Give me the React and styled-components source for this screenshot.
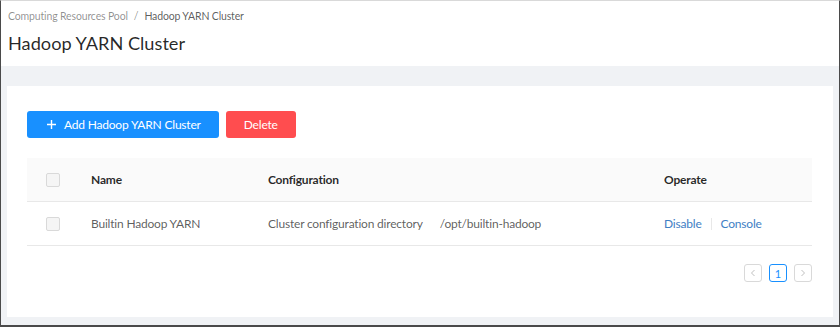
import styled, { createGlobalStyle } from "styled-components";

const GlobalStyle = createGlobalStyle`
  html, body { margin: 0; padding: 0; }
  body {
    font-family: Lato, "Open Sans", sans-serif;
    color: rgba(0, 0, 0, 0.65);
    background: #fff;
  }
`;

const Frame = styled.div`
  width: 840px;
  height: 327px;
  box-sizing: border-box;
  border: 1px solid #4a4a4a;
  border-top-color: #d9d9d9;
  border-bottom-width: 2px;
  background: #f0f2f5;
  display: flex;
  flex-direction: column;
  overflow: hidden;
`;

const Header = styled.div`
  background: #fff;
  padding: 7px 7px 0 7px;
  height: 65px;
  box-sizing: border-box;
`;

const Crumbs = styled.div`
  font-size: 10.5px;
  letter-spacing: -0.15px;
  color: rgba(0, 0, 0, 0.45);
  display: flex;
  gap: 6px;
  line-height: 16px;

  span:last-child { color: rgba(0, 0, 0, 0.65); }
`;

const Title = styled.h1`
  margin: 6px 0 0;
  font-size: 18.2px;
  font-weight: 400;
  color: rgba(0, 0, 0, 0.85);
  line-height: 26px;
`;

const Body = styled.div`
  padding: 20px 6px 8px 6px;
  flex: 1;
  display: flex;
`;

const Card = styled.div`
  flex: 1;
  background: #fff;
  padding: 25px 20px 0 20px;
`;

const Toolbar = styled.div`
  display: flex;
  gap: 7px;
  margin-bottom: 20px;
`;

const Button = styled.button`
  height: 27px;
  border: none;
  border-radius: 3px;
  padding: ${({ $wide }) => ($wide ? "0 18px 0 20px" : "0 18px")};
  min-width: ${({ $wide }) => ($wide ? "191px" : "70px")};
  justify-content: center;
  font-family: inherit;
  font-size: 12px;
  letter-spacing: -0.2px;
  color: #fff;
  background: ${({ $danger }) => ($danger ? "#ff4d4f" : "#1890ff")};
  display: flex;
  align-items: center;
  gap: 8px;
`;

const Table = styled.div`
  width: 785px;
  font-size: 12px;
  letter-spacing: -0.2px;
`;

const Row = styled.div`
  display: grid;
  grid-template-columns: 64px 177px 396px 1fr;
  align-items: center;
  height: 43px;
  border-bottom: 1px solid #e8e8e8;
  background: ${({ $head }) => ($head ? "#fafafa" : "#fff")};
  color: ${({ $head }) => ($head ? "rgba(0,0,0,0.85)" : "rgba(0,0,0,0.65)")};
  font-weight: ${({ $head }) => ($head ? 700 : 400)};
`;

const Check = styled.span`
  width: 12px;
  height: 12px;
  margin-left: 19px;
  border: 1px solid #d9d9d9;
  background: #f5f5f5;
  border-radius: 2px;
`;

const Config = styled.span`
  display: flex;
  gap: 17px;
`;

const Ops = styled.span`
  display: flex;
  align-items: center;
  gap: 9px;
  color: #3f80c4;
  font-weight: 400;
`;

const Divider = styled.i`
  width: 1px;
  height: 12px;
  background: #e8e8e8;
`;

const Pager = styled.div`
  width: 785px;
  display: flex;
  justify-content: flex-end;
  gap: 7px;
  margin-top: 18px;
`;

const PageItem = styled.span`
  width: 16px;
  height: 16px;
  border: 1px solid ${({ $active }) => ($active ? "#1890ff" : "#d9d9d9")};
  border-radius: 3px;
  display: flex;
  align-items: center;
  justify-content: center;
  font-size: 11px;
  color: ${({ $active }) => ($active ? "#1890ff" : "#c0c0c0")};
`;

const Chevron = ({ dir }) => (
  <svg width="8" height="8" viewBox="0 0 8 8">
    <path
      d={dir === "left" ? "M5.5 1 L2.5 4 L5.5 7" : "M2.5 1 L5.5 4 L2.5 7"}
      fill="none"
      stroke="currentColor"
      strokeWidth="1"
    />
  </svg>
);

const App = () => (
  <>
    <GlobalStyle />
    <Frame>
      <Header>
        <Crumbs>
          <span>Computing Resources Pool</span>
          <span>/</span>
          <span>Hadoop YARN Cluster</span>
        </Crumbs>
        <Title>Hadoop YARN Cluster</Title>
      </Header>
      <Body>
        <Card>
          <Toolbar>
            <Button $wide>
              <svg width="9" height="9" viewBox="0 0 9 9">
                <path d="M4.5 0 V9 M0 4.5 H9" stroke="#fff" strokeWidth="1.4" />
              </svg>
              Add Hadoop YARN Cluster
            </Button>
            <Button $danger>Delete</Button>
          </Toolbar>
          <Table>
            <Row $head>
              <Check />
              <span>Name</span>
              <span>Configuration</span>
              <span>Operate</span>
            </Row>
            <Row>
              <Check />
              <span>Builtin Hadoop YARN</span>
              <Config>
                <span>Cluster configuration directory</span>
                <span>/opt/builtin-hadoop</span>
              </Config>
              <Ops>
                <span>Disable</span>
                <Divider />
                <span>Console</span>
              </Ops>
            </Row>
          </Table>
          <Pager>
            <PageItem><Chevron dir="left" /></PageItem>
            <PageItem $active>1</PageItem>
            <PageItem><Chevron dir="right" /></PageItem>
          </Pager>
        </Card>
      </Body>
    </Frame>
  </>
);

export default App;
